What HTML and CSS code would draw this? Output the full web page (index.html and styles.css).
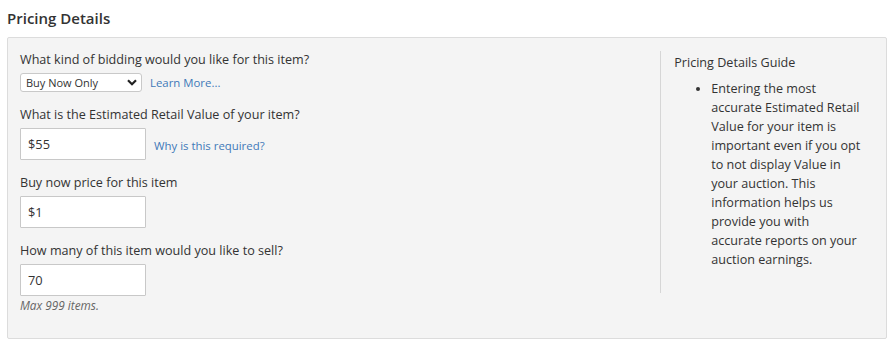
FILE: index.html
```html
<!DOCTYPE html>
<html lang="en">
<head>
<meta charset="utf-8">
<title>Pricing Details</title>
<link rel="stylesheet" href="styles.css">
</head>
<body>
<h2 class="section-title">Pricing Details</h2>
<div class="panel">
  <div class="form-col">
    <div class="field">
      <label class="field-label" for="bidding">What kind of bidding would you like for this item?</label>
      <div class="inline-row">
        <div class="select-wrap">
          <select id="bidding" class="select">
            <option>Buy Now Only</option>
            <option>Auction</option>
          </select>
          <svg class="chevron" width="10" height="7" viewBox="0 0 10 7"><path d="M1 1.2 L5 5.2 L9 1.2" fill="none" stroke="#222" stroke-width="2.2"/></svg>
        </div>
        <a class="link" href="#">Learn More...</a>
      </div>
    </div>
    <div class="field">
      <label class="field-label" for="erv">What is the Estimated Retail Value of your item?</label>
      <div class="inline-row">
        <input id="erv" class="text-input" type="text" value="$55">
        <a class="link link-why" href="#">Why is this required?</a>
      </div>
    </div>
    <div class="field">
      <label class="field-label" for="bn">Buy now price for this item</label>
      <input id="bn" class="text-input" type="text" value="$1">
    </div>
    <div class="field field-last">
      <label class="field-label" for="qty">How many of this item would you like to sell?</label>
      <input id="qty" class="text-input" type="text" value="70">
      <div class="hint">Max 999 items.</div>
    </div>
  </div>
  <div class="guide-col">
    <div class="guide-title">Pricing Details Guide</div>
    <ul class="guide-list">
      <li>Entering the most<br>accurate Estimated Retail<br>Value for your item is<br>important even if you opt<br>to not display Value in<br>your auction. This<br>information helps us<br>provide you with<br>accurate reports on your<br>auction earnings.</li>
    </ul>
  </div>
</div>
</body>
</html>
```
FILE: styles.css
```css
* { box-sizing: border-box; }
body {
  margin: 0;
  padding: 0 4px 0 7px;
  font-family: "Open Sans", "Liberation Sans", sans-serif;
  color: #333;
  background: #fff;
}
.section-title {
  margin: 0;
  padding-top: 6px;
  font-size: 15px;
  font-weight: 600;
  line-height: 24px;
  color: #333;
}
.panel {
  margin-top: 7px;
  width: 880px;
  height: 302px;
  background: #f4f4f4;
  border: 1px solid #dcdcdc;
  border-radius: 2px;
  padding: 12px 0 0 12px;
  display: flex;
  align-items: flex-start;
}
.form-col {
  width: 641px;
}
.field {
  margin-bottom: 13px;
}
.field-label {
  display: block;
  font-size: 12.6px;
  line-height: 19px;
  margin-bottom: 4px;
}
.inline-row {
  display: flex;
  align-items: center;
}
.select-wrap {
  position: relative;
  width: 122px;
  height: 19px;
}
.select {
  appearance: none;
  -webkit-appearance: none;
  display: block;
  width: 122px;
  height: 19px;
  border: 1px solid #c9c9c9;
  border-radius: 3px;
  background: #fff;
  font-family: "Open Sans", "Liberation Sans", sans-serif;
  font-size: 11px;
  color: #333;
  padding: 0 0 0 5px;
  line-height: 17px;
}
.chevron {
  position: absolute;
  right: 5px;
  top: 6px;
  pointer-events: none;
}
.link {
  font-size: 11.4px;
  color: #4179b8;
  text-decoration: none;
  margin-left: 8px;
}
.link-why {
  margin-left: 8px;
  margin-top: 2px;
}
.text-input {
  display: block;
  width: 126px;
  height: 32px;
  border: 1px solid #c8c8c8;
  border-radius: 1px;
  background: #fff;
  font-family: "Open Sans", "Liberation Sans", sans-serif;
  font-size: 12.8px;
  color: #333;
  padding: 0 7px;
}
.hint {
  margin-top: 1px;
  font-size: 11.8px;
  font-style: italic;
  color: #666;
  line-height: 17px;
}
.guide-col {
  margin-top: 1px;
  width: 226px;
  border-left: 1px solid #d6d6d6;
  padding: 2px 8px 24px 13px;
}
.guide-title {
  font-size: 12.6px;
  line-height: 19px;
}
.guide-list {
  margin: 7px 0 0 0;
  padding-left: 37px;
  font-size: 12.6px;
  line-height: 19px;
}
```
